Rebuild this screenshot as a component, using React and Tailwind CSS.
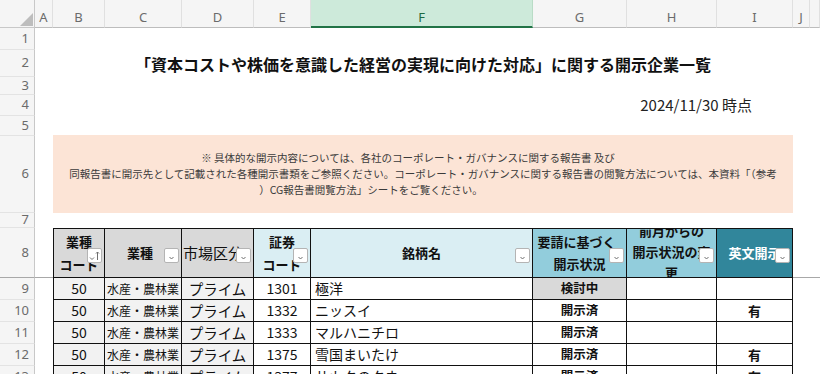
import React from "react";

const GRID =
  "grid grid-cols-[35px_18px_52px_77px_72px_57px_222px_94px_90px_76px_17px_1fr] grid-rows-[28px_22px_27px_18px_21px_20px_77px_15px_50px_22px_22px_22px_22px_22px]";
const JP = "font-['Noto_Sans_CJK_JP',sans-serif]";
const UI = "font-['Noto_Sans','Open_Sans',sans-serif]";

function RH({ n, freeze }) {
  return (
    <div
      className={`flex items-center justify-end pr-[5px] bg-[#f5f5f5] border-r border-[#c8c8c8] ${
        freeze ? "border-b border-b-[#a8a8a8]" : "border-b border-b-[#e3e3e3]"
      } text-[13px] text-[#6b6b6b] ${UI}`}
    >
      {n}
    </div>
  );
}

function FilterBtn({ sorted }) {
  return (
    <div className="absolute right-[2px] top-[19px] w-[15px] h-[15px] bg-white border border-[#b4b4b4] rounded-[2px] flex items-center justify-center z-10">
      <svg width="13" height="13" viewBox="0 0 13 13">
        {sorted ? (
          <>
            <path d="M2 8.5 L4 10.5 L6 8.5" fill="none" stroke="#6f6f6f" strokeWidth="1" />
            <path d="M9.5 3 V11 M8 4.5 L9.5 3 L11 4.5" fill="none" stroke="#6f6f6f" strokeWidth="1" />
          </>
        ) : (
          <path d="M4.5 8 L6.5 10 L8.5 8" fill="none" stroke="#6f6f6f" strokeWidth="1" />
        )}
      </svg>
    </div>
  );
}

const COLS = ["A", "B", "C", "D", "E", "F", "G", "H", "I", "J", ""];

const DATA = [
  [9, "1301", "極洋", "検討中", ""],
  [10, "1332", "ニッスイ", "開示済", "有"],
  [11, "1333", "マルハニチロ", "開示済", ""],
  [12, "1375", "雪国まいたけ", "開示済", "有"],
  [13, "1377", "サカタのタネ", "開示済", "有"],
];

const cellB = "border-r border-b border-[#111]";

export default function App() {
  return (
    <div className="w-[820px] h-[374px] overflow-hidden bg-white">
      <div className={`${GRID}`}>
        {/* column header */}
        <div className="relative bg-[#f5f5f5] border-r border-b border-[#c8c8c8]">
          <svg className="absolute left-[20px] top-[13px]" width="13" height="13" viewBox="0 0 13 13">
            <path d="M13 0 L13 13 L0 13 Z" fill="#bdbdbd" />
          </svg>
        </div>
        {COLS.map((c, i) =>
          c === "F" ? (
            <div
              key={i}
              className={`flex items-center justify-center pt-[9px] bg-[#cdeada] border-b-2 border-b-[#217346] border-r border-r-[#b9dcc6] text-[13px] text-[#1e6b41] ${UI}`}
            >
              {c}
            </div>
          ) : (
            <div
              key={i}
              className={`flex items-center justify-center pt-[9px] bg-[#f5f5f5] border-b border-b-[#bdbdbd] border-r border-r-[#e0e0e0] text-[13px] text-[#6b6b6b] ${UI}`}
            >
              {c}
            </div>
          )
        )}

        {/* row 1 */}
        <RH n={1} />
        <div className="col-span-11" />

        {/* row 2 title */}
        <RH n={2} />
        <div />
        <div
          className={`col-span-8 flex items-center justify-center whitespace-nowrap text-[16px] font-bold text-[#111] ${JP}`}
        >
          「資本コストや株価を意識した経営の実現に向けた対応」に関する開示企業一覧
        </div>
        <div className="col-span-2" />

        {/* row 3 */}
        <RH n={3} />
        <div className="col-span-11" />

        {/* row 4 date */}
        <RH n={4} />
        <div />
        <div
          className={`col-span-8 flex items-center justify-end pr-[41px] whitespace-nowrap text-[15px] text-[#222] ${JP}`}
        >
          2024/11/30 時点
        </div>
        <div className="col-span-2" />

        {/* row 5 */}
        <RH n={5} />
        <div className="col-span-11" />

        {/* row 6 note */}
        <RH n={6} />
        <div />
        <div
          className={`col-span-8 -mt-[1px] bg-[#fce4d6] flex flex-col items-center justify-center text-[10.5px] leading-[16px] text-[#3a3a3a] whitespace-nowrap ${JP}`}
        >
          <div className="pr-[30px]">
            ※ 具体的な開示内容については、各社のコーポレート・ガバナンスに関する報告書 及び
          </div>
          <div>
            同報告書に開示先として記載された各種開示書類をご参照ください。コーポレート・ガバナンスに関する報告書の閲覧方法については、本資料「（参考
          </div>
          <div className="pr-[104px]">）CG報告書閲覧方法」シートをご覧ください。</div>
        </div>
        <div className="col-span-2" />

        {/* row 7 */}
        <RH n={7} />
        <div className="col-span-11" />

        {/* row 8 header */}
        <RH n={8} freeze />
        <div className="border-b border-[#a8a8a8]" />
        <div
          className={`relative bg-[#d9d9d9] border-l border-t ${cellB} flex flex-col items-center justify-center text-[13px] leading-[23px] font-bold text-[#111] ${JP}`}
        >
          <div>業種</div>
          <div>コード</div>
          <FilterBtn sorted />
        </div>
        <div
          className={`relative bg-[#d9d9d9] border-t ${cellB} flex items-center justify-center pr-[6px] text-[13px] font-bold text-[#111] ${JP}`}
        >
          業種
          <FilterBtn />
        </div>
        <div
          className={`relative bg-[#d9d9d9] border-t ${cellB} flex items-center pl-[1px] overflow-hidden whitespace-nowrap text-[15px] text-[#111] ${JP}`}
        >
          市場区分
          <FilterBtn />
        </div>
        <div
          className={`relative bg-[#daeef3] border-t ${cellB} flex flex-col items-center justify-center text-[13px] leading-[23px] font-bold text-[#111] ${JP}`}
        >
          <div>証券</div>
          <div>コード</div>
          <FilterBtn />
        </div>
        <div
          className={`relative bg-[#daeef3] border-t ${cellB} flex items-center justify-center text-[13px] font-bold text-[#111] ${JP}`}
        >
          銘柄名
          <FilterBtn />
        </div>
        <div
          className={`relative bg-[#92cddc] border-t ${cellB} flex flex-col items-center justify-center text-[13px] leading-[22px] font-bold text-[#111] whitespace-nowrap ${JP}`}
        >
          <div className="pr-[6px]">要請に基づく</div>
          <div>開示状況</div>
          <FilterBtn />
        </div>
        <div
          className={`relative bg-[#92cddc] border-t ${cellB} flex flex-col items-center justify-center pb-[4px] overflow-hidden text-[13px] leading-[21px] font-bold text-[#111] whitespace-nowrap ${JP}`}
        >
          <div>前月からの</div>
          <div>開示状況の変</div>
          <div>更</div>
          <FilterBtn />
        </div>
        <div
          className={`relative bg-[#31869b] border-t ${cellB} flex items-center justify-center overflow-hidden text-[13px] font-bold text-white whitespace-nowrap ${JP}`}
        >
          英文開示
          <FilterBtn />
        </div>
        <div className="border-b border-[#a8a8a8]" />
        <div className="border-b border-[#a8a8a8]" />

        {/* data rows */}
        {DATA.map(([n, code, name, status, en]) => (
          <React.Fragment key={n}>
            <RH n={n} />
            <div />
            <div
              className={`bg-[#f2f2f2] border-l ${cellB} flex items-center justify-center text-[14px] text-[#111] ${JP}`}
            >
              50
            </div>
            <div
              className={`bg-[#f2f2f2] ${cellB} flex items-center pl-[2px] whitespace-nowrap overflow-hidden text-[12px] text-[#111] ${JP}`}
            >
              水産・農林業
            </div>
            <div
              className={`bg-[#f2f2f2] ${cellB} flex items-center justify-center whitespace-nowrap text-[14.5px] text-[#111] ${JP}`}
            >
              プライム
            </div>
            <div
              className={`${cellB} flex items-center justify-center text-[14px] text-[#111] ${JP}`}
            >
              {code}
            </div>
            <div
              className={`${cellB} flex items-center pl-[4px] text-[14px] text-[#111] ${JP}`}
            >
              {name}
            </div>
            <div
              className={`${n === 9 ? "bg-[#d9d9d9]" : ""} ${cellB} flex items-center justify-center text-[12.5px] font-bold text-[#111] ${JP}`}
            >
              {status}
            </div>
            <div className={`${cellB}`} />
            <div
              className={`${cellB} flex items-center justify-center text-[13px] font-bold text-[#111] ${JP}`}
            >
              {en}
            </div>
            <div />
            <div />
          </React.Fragment>
        ))}
      </div>
    </div>
  );
}
